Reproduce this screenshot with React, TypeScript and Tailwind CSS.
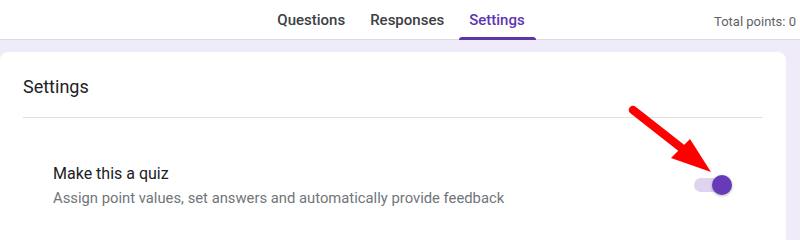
import { useState } from 'react'

const tabs = ['Questions', 'Responses', 'Settings']

function Toggle({ on }: { on: boolean }) {
  return (
    <div className="relative h-5 w-[38px] shrink-0">
      <div className={`absolute left-0 top-[3px] h-[14px] w-[34px] rounded-full ${on ? 'bg-[#ddd5f0]' : 'bg-gray-300'}`} />
      <div
        className={`absolute top-0 h-5 w-5 rounded-full shadow-[0_1px_3px_rgba(0,0,0,0.3)] ${
          on ? 'right-0 bg-[#673ab7]' : 'left-0 bg-white'
        }`}
      />
    </div>
  )
}

export default function App() {
  const [active] = useState('Settings')

  return (
    <div className="relative h-[240px] w-[800px] overflow-hidden bg-[#f0ebf8] font-['Roboto',sans-serif]">
      {/* top bar */}
      <div className="relative flex h-[40px] items-end justify-center border-b border-[#dadce0] bg-white">
        <div className="flex h-full items-stretch pl-[2px]">
          {tabs.map((t) => (
            <div key={t} className="relative flex items-center px-[12.5px] pt-[1px]">
              <span
                className={`text-[15px] font-medium ${
                  t === active ? 'text-[#5e35b1]' : 'text-[#3c4043]'
                }`}
              >
                {t}
              </span>
              {t === active && (
                <div className="absolute bottom-[-1px] left-[2px] right-[1px] h-[3px] rounded-t-[3px] bg-[#5b35a8]" />
              )}
            </div>
          ))}
        </div>
        <div className="absolute right-[4px] top-[12px] text-[13px] text-[#5f6368]">Total points: 0</div>
      </div>

      {/* card */}
      <div className="pr-[14px] pt-[12px]">
        <div className="rounded-lg bg-white px-[23px] pb-10">
          <div className="border-b border-[#e0e0e0] pb-[18px] pt-[23px] text-[18px] leading-6 text-[#202124]">
            Settings
          </div>
          <div className="flex items-center justify-between pl-[30px] pr-[31px] pt-[44px]">
            <div>
              <div className="text-[16px] leading-6 text-[#202124]">Make this a quiz</div>
              <div className="mt-[2px] text-[14.8px] leading-5 text-[#70757a]">
                Assign point values, set answers and automatically provide feedback
              </div>
            </div>
            <Toggle on />
          </div>
        </div>
      </div>

      {/* annotation arrow */}
      <svg className="pointer-events-none absolute left-0 top-0" width="800" height="240">
        <line x1="633" y1="110" x2="684" y2="150" stroke="#ff0000" strokeWidth="8.5" strokeLinecap="round" />
        <polygon points="671,158 690,139 711,172" fill="#ff0000" />
      </svg>
    </div>
  )
}
